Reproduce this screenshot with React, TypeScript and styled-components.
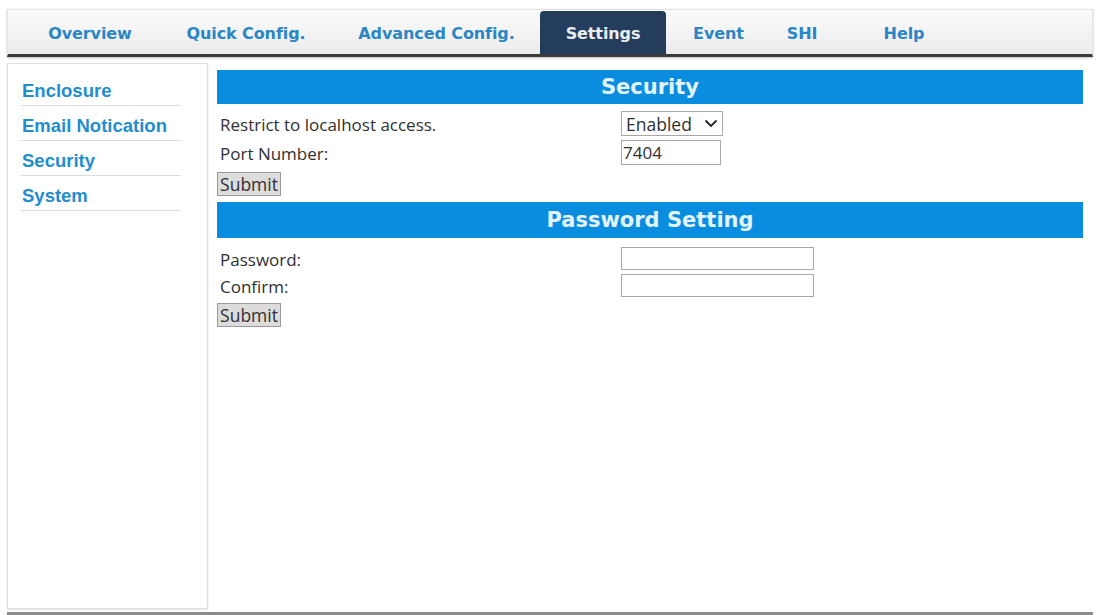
import React from "react";
import styled, { createGlobalStyle } from "styled-components";

const GlobalStyle = createGlobalStyle`
    html, body {
        margin: 0;
        padding: 0;
        background: #ffffff;
    }
    body {
        font-family: "Open Sans", "DejaVu Sans", sans-serif;
        color: #333333;
        overflow: hidden;
    }
`
const Page = styled.div`
    width: 1098px;
    height: 615px;
    display: flex;
    flex-direction: column;
    padding: 9px 5px 0 7px;
    box-sizing: border-box;
`
const TabBar = styled.div`
    display: flex;
    align-items: stretch;
    height: 48px;
    box-sizing: border-box;
    padding-left: 13px;
    background: linear-gradient(#fbfbfb, #ececec);
    border: 1px solid #e2e2e2;
    border-bottom: 3px solid #3a3a3a;
    box-shadow: 0 1px 2px rgba(0, 0, 0, 0.25);
`
const Tab = styled.div<{ $w: number; $active?: boolean }>`
    width: ${p => p.$w}px;
    display: flex;
    align-items: center;
    justify-content: center;
    margin-top: 1px;
    padding-top: 2px;
    font-family: "DejaVu Sans", Verdana, sans-serif;
    font-weight: bold;
    font-size: 16px;
    letter-spacing: -0.1px;
    color: ${p => (p.$active ? "#e9eef4" : "#2a86c6")};
    background: ${p => (p.$active ? "#243d5c" : "transparent")};
    border-radius: 4px 4px 0 0;
`
const Body = styled.div`
    flex: 1;
    display: flex;
    align-items: flex-start;
    gap: 9px;
    padding-top: 6px;
    border-bottom: 3px solid #8c8c8c;
    box-sizing: border-box;
`
const Sidebar = styled.div`
    width: 201px;
    height: 546px;
    box-sizing: border-box;
    padding: 7px 0 0 13px;
    border: 1px solid #dedede;
    box-shadow: 0 1px 2px rgba(0, 0, 0, 0.12);
`
const SideItem = styled.div`
    width: 160px;
    height: 35px;
    box-sizing: border-box;
    display: flex;
    align-items: center;
    padding: 5px 0 0 1px;
    border-bottom: 1px solid #dcdcdc;
    font-family: "Liberation Sans", Arial, sans-serif;
    font-weight: bold;
    font-size: 18.5px;
    color: #1f8ecf;
`
const Main = styled.div`
    width: 866px;
    display: flex;
    flex-direction: column;
    align-items: flex-start;
    padding-top: 7px;
`
const SectionHeader = styled.div<{ $h: number; $top?: number }>`
    align-self: stretch;
    height: ${p => p.$h}px;
    margin-top: ${p => p.$top ?? 0}px;
    display: flex;
    align-items: center;
    justify-content: center;
    background: #0b8ddf;
    color: #e2f4ff;
    font-family: "DejaVu Sans", Verdana, sans-serif;
    font-weight: bold;
    font-size: 21px;
`
const FormGrid = styled.div<{ $top: number; $gap: number }>`
    display: grid;
    grid-template-columns: 404px auto;
    row-gap: ${p => p.$gap}px;
    align-items: center;
    margin-top: ${p => p.$top}px;
`
const Label = styled.div`
    font-size: 17px;
    line-height: 20px;
    padding: 2px 0 0 3px;
    color: #303030;
`
const TextBox = styled.input<{ $w: number; $h: number }>`
    width: ${p => p.$w}px;
    height: ${p => p.$h}px;
    box-sizing: border-box;
    border: 1px solid #a8a8a8;
    padding: 0 1px;
    font-family: "Open Sans", "DejaVu Sans", sans-serif;
    font-size: 17px;
    color: #303030;
    outline: none;
`
const SelectWrap = styled.div`
    position: relative;
    width: 102px;
    height: 25px;
`
const Select = styled.select`
    width: 100%;
    height: 100%;
    box-sizing: border-box;
    appearance: none;
    border: 1px solid #a8a8a8;
    border-radius: 0;
    background: #ffffff;
    padding: 0 0 0 4px;
    font-family: "Open Sans", "DejaVu Sans", sans-serif;
    font-size: 17.5px;
    color: #303030;
    outline: none;
`
const Chevron = styled.svg`
    position: absolute;
    right: 5px;
    top: 8px;
    pointer-events: none;
`
const SubmitButton = styled.button<{ $top: number }>`
    margin-top: ${p => p.$top}px;
    width: 64px;
    height: 24px;
    padding: 0;
    box-sizing: border-box;
    background: #dcdcdc;
    border: 1px solid #9a9a9a;
    border-radius: 0;
    font-family: "Open Sans", "DejaVu Sans", sans-serif;
    font-size: 17.5px;
    line-height: 20px;
    color: #303030;
`

const tabs = [
    { name: "Overview", w: 138 },
    { name: "Quick Config.", w: 174 },
    { name: "Advanced Config.", w: 207 },
    { name: "Settings", w: 126 },
    { name: "Event", w: 105 },
    { name: "SHI", w: 62 },
    { name: "Help", w: 142 },
];

const sideItems = ["Enclosure", "Email Notication", "Security", "System"];

function App() {
    return (
        <>
            <GlobalStyle />
            <Page>
                <TabBar>
                    {tabs.map(t => (
                        <Tab key={t.name} $w={t.w} $active={t.name === "Settings"}>
                            {t.name}
                        </Tab>
                    ))}
                </TabBar>
                <Body>
                    <Sidebar>
                        {sideItems.map(item => (
                            <SideItem key={item}>{item}</SideItem>
                        ))}
                    </Sidebar>
                    <Main>
                        <SectionHeader $h={34}>Security</SectionHeader>
                        <FormGrid $top={7} $gap={4}>
                            <Label>Restrict to localhost access.</Label>
                            <SelectWrap>
                                <Select defaultValue="enabled">
                                    <option value="enabled">Enabled</option>
                                    <option value="disabled">Disabled</option>
                                </Select>
                                <Chevron width="14" height="9" viewBox="0 0 14 9">
                                    <path d="M1.5 1.5 L7 7 L12.5 1.5" fill="none" stroke="#222" strokeWidth="1.8" />
                                </Chevron>
                            </SelectWrap>
                            <Label>Port Number:</Label>
                            <TextBox $w={100} $h={25} defaultValue="7404" />
                        </FormGrid>
                        <SubmitButton $top={7}>Submit</SubmitButton>
                        <SectionHeader $h={36} $top={6}>Password Setting</SectionHeader>
                        <FormGrid $top={9} $gap={4}>
                            <Label>Password:</Label>
                            <TextBox $w={193} $h={23} type="password" />
                            <Label>Confirm:</Label>
                            <TextBox $w={193} $h={23} type="password" />
                        </FormGrid>
                        <SubmitButton $top={6}>Submit</SubmitButton>
                    </Main>
                </Body>
            </Page>
        </>
    );
}

export default App;
